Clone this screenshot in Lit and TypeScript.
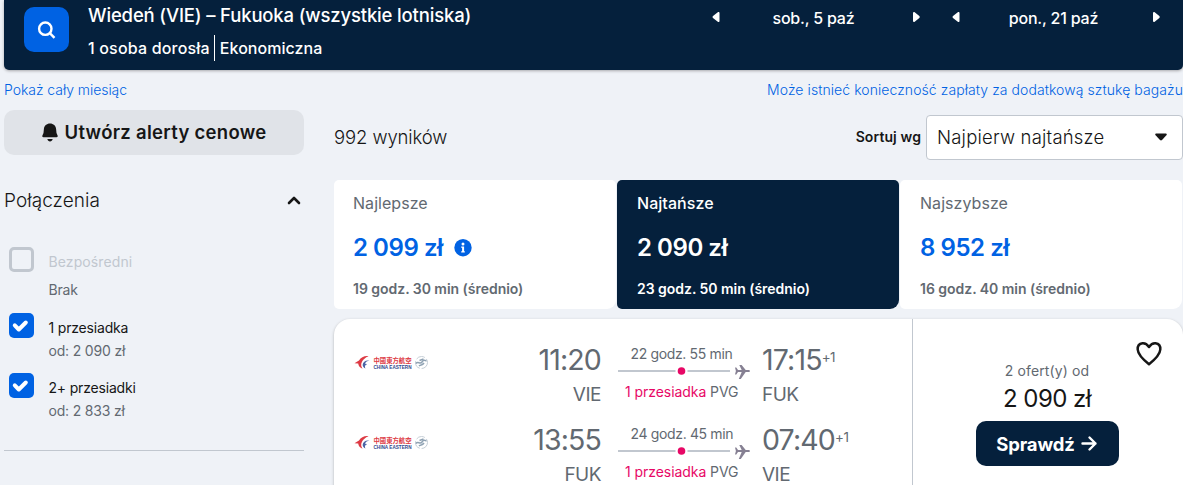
import { html, css, svg, LitElement } from 'lit';
import { customElement, property } from 'lit/decorators.js';
import { classMap } from 'lit/directives/class-map.js';

@customElement('search-header')
export class SearchHeader extends LitElement {
  static styles = css`
    :host {
      display: block;
    }

    header {
      box-sizing: border-box;
      height: 70px;
      padding: 0 23px 0 20px;
      display: flex;
      align-items: flex-start;
      background: #05203c;
      color: #fff;
      border-radius: 0 0 5px 5px;
      box-shadow: 0 1px 3px rgba(37, 32, 31, 0.35);
      font-weight: 450;
      font-size: 16px;
    }

    .search {
      display: flex;
      align-items: center;
      justify-content: center;
      width: 45px;
      height: 45px;
      margin: 7px 19px 0 0;
      padding: 0;
      border: 0;
      border-radius: 10px;
      background: #0062e3;
    }

    .route {
      line-height: 24px;
      padding-top: 3px;
      font-size: 18.5px;
      letter-spacing: -0.16px;
      white-space: nowrap;
    }

    .details {
      display: flex;
      margin-top: 8px;
      line-height: 26px;
      letter-spacing: 0.18px;
    }

    .details span + span {
      margin-left: 4px;
      padding-left: 5px;
      border-left: 1px solid #fff;
      letter-spacing: 0.05px;
    }

    .dates {
      margin-left: auto;
      display: flex;
      gap: 32px;
      padding-top: 6px;
    }

    .stepper {
      width: 208px;
      display: flex;
      justify-content: space-between;
      line-height: 24px;
      letter-spacing: -0.2px;
    }

    .stepper span {
      margin-right: 5px;
    }

    .stepper svg {
      display: block;
      margin-top: 5px;
    }
  `;

  stepper(label: string) {
    return html`
      <div class="stepper">
        <svg width="8" height="12" viewBox="0 0 8 12"><path fill="#fff" d="M7.500 2v8c0 1-1 1.300-1.700.7L1 7c-.6-.5-.6-1.400 0-2L5.800 1.300C6.500.7 7.500 1 7.500 2z" /></svg>
        <span>${label}</span>
        <svg width="8" height="12" viewBox="0 0 8 12"><path fill="#fff" d="M1 2v8c0 1 1 1.300 1.700.7L7.300 7c.6-.5.6-1.400 0-2L2.700 1.300C2 .7 1 1 1 2z" /></svg>
      </div>
    `;
  }

  render() {
    return html`
      <header>
        <button class="search">
          <svg width="20" height="20" viewBox="0 0 20 20" fill="none" stroke="#fff" stroke-width="2.400">
            <circle cx="8.300" cy="8.700" r="6.200" />
            <path d="M12.800 13.200l4.700 4.700" />
          </svg>
        </button>
        <div>
          <div class="route">Wiedeń (VIE) – Fukuoka (wszystkie lotniska)</div>
          <div class="details"><span>1 osoba dorosła</span><span>Ekonomiczna</span></div>
        </div>
        <div class="dates">${this.stepper('sob., 5 paź')} ${this.stepper('pon., 21 paź')}</div>
      </header>
    `;
  }
}

@customElement('stops-filter')
export class StopsFilter extends LitElement {
  static styles = css`
    :host {
      display: block;
    }

    .alert {
      width: 300px;
      height: 45px;
      border: 0;
      border-radius: 10px;
      background: #e0e3e8;
      color: #161616;
      display: flex;
      align-items: center;
      justify-content: center;
      gap: 7px;
      padding: 0 0 1px;
      font: 600 18.5px Inter, sans-serif;
      letter-spacing: 0.28px;
      white-space: nowrap;
    }

    .title {
      display: flex;
      justify-content: space-between;
      align-items: center;
      margin-top: 33px;
      padding-right: 3px;
      line-height: 25px;
      font-size: 19px;
      font-weight: 350;
      letter-spacing: 0.05px;
      color: #161616;
    }

    .option {
      display: flex;
      height: 60px;
      padding-left: 5px;
    }

    .option.disabled {
      height: 66px;
      margin-top: 34px;
    }

    .box {
      box-sizing: border-box;
      width: 25px;
      height: 25px;
      border-radius: 5px;
      background: #0062e3;
      margin-right: 14.5px;
    }

    .disabled .box {
      background: none;
      border: 3px solid #c1c7cf;
    }

    .box svg {
      display: block;
    }

    .name,
    .price {
      font-size: 14px;
      line-height: 23px;
      color: #161616;
      letter-spacing: -0.18px;
    }

    .name {
      padding-top: 3px;
    }

    .price {
      color: #626971;
    }

    .disabled .name {
      color: #c1c7cf;
      line-height: 24px;
      letter-spacing: 0.1px;
    }

    .disabled .price {
      line-height: 32px;
    }

    hr {
      margin: 17px 0 0;
      border: 0;
      height: 1px;
      background: #c1c7cf;
    }
  `;

  options = [
    { name: 'Bezpośredni', price: 'Brak', disabled: true },
    { name: '1 przesiadka', price: 'od: 2 090 zł', disabled: false },
    { name: '2+ przesiadki', price: 'od: 2 833 zł', disabled: false },
  ];

  render() {
    return html`
      <button class="alert">
        <svg width="16" height="19" viewBox="0 0 16 19" fill="#161616">
          <path d="M8 .5c-3.400 0-5.800 2.300-6.100 5.500L1.500 10 .4 12.500C0 13.500.5 14.200 1.500 14.200h13c1 0 1.500-.7 1.100-1.700L14.500 10l-.4-4C13.800 2.800 11.400.5 8 .5z" />
          <path d="M5.300 16h5.400c-.4 1.600-1.300 2.400-2.700 2.400S5.700 17.600 5.300 16z" />
        </svg>
        Utwórz alerty cenowe
      </button>
      <div class="title">
        Połączenia
        <svg width="14" height="10" viewBox="0 0 14 10" fill="none" stroke="#161616" stroke-width="2.600" stroke-linecap="round" stroke-linejoin="round">
          <path d="M2 7l5-5 5 5" />
        </svg>
      </div>
      ${this.options.map(
        (option) => html`
          <div class=${classMap({ option: true, disabled: option.disabled })}>
            <div class="box">
              ${option.disabled
                ? ''
                : html`<svg width="25" height="25" viewBox="0 0 25 25" fill="none" stroke="#fff" stroke-width="4" stroke-linecap="round" stroke-linejoin="round">
                    <path d="M5.800 12.300l4 4.200 7-7" />
                  </svg>`}
            </div>
            <div>
              <div class="name">${option.name}</div>
              <div class="price">${option.price}</div>
            </div>
          </div>
        `
      )}
      <hr />
    `;
  }
}

@customElement('sort-tabs')
export class SortTabs extends LitElement {
  static styles = css`
    :host {
      display: grid;
      grid-template-columns: repeat(3, 1fr);
      gap: 1px;
      padding-right: 1px;
    }

    .tab {
      box-sizing: border-box;
      height: 129px;
      padding: 11px 20px 0;
      background: #fff;
      border-radius: 5px 5px 9px 5px;
      color: #626971;
      white-space: nowrap;
    }

    .tab:first-child {
      padding-left: 19px;
    }

    .label {
      font-size: 16px;
      line-height: 24px;
      letter-spacing: 0.05px;
    }

    .price {
      display: flex;
      align-items: center;
      gap: 11px;
      margin-top: 17px;
      font-size: 24px;
      line-height: 32px;
      font-weight: 600;
      letter-spacing: -0.45px;
      color: #0062e3;
    }

    .time {
      margin-top: 14px;
      font-size: 14px;
      line-height: 22px;
      font-weight: 600;
      letter-spacing: -0.03px;
    }

    .tab.selected {
      background: #05203c;
    }

    .selected .label,
    .selected .price,
    .selected .time {
      color: #fff;
    }

    .selected .label {
      font-weight: 450;
    }
  `;

  tabs = [
    { label: 'Najlepsze', price: '2 099 zł', time: '19 godz. 30 min (średnio)', info: true },
    { label: 'Najtańsze', price: '2 090 zł', time: '23 godz. 50 min (średnio)', selected: true },
    { label: 'Najszybsze', price: '8 952 zł', time: '16 godz. 40 min (średnio)' },
  ];

  render() {
    return this.tabs.map(
      (tab) => html`
        <div class=${classMap({ tab: true, selected: !!tab.selected })}>
          <div class="label">${tab.label}</div>
          <div class="price">
            <span>${tab.price}</span>
            ${tab.info
              ? html`<svg width="18" height="18" viewBox="0 0 18 18">
                  <circle cx="9" cy="8.700" r="8.700" fill="#0062e3" />
                  <circle cx="9" cy="5" r="1.500" fill="#fff" />
                  <path d="M7.200 7.400h2.900v4.800h.7v1.400H7.200v-1.400h.9V8.800h-.9z" fill="#fff" />
                </svg>`
              : ''}
          </div>
          <div class="time">${tab.time}</div>
        </div>
      `
    );
  }
}

@customElement('flight-leg')
export class FlightLeg extends LitElement {
  static styles = css`
    :host {
      display: grid;
      grid-template-columns: 76px 171px 132px 1fr;
      height: 80px;
      color: #626971;
      white-space: nowrap;
    }

    .logo {
      margin-top: 12px;
      overflow: visible;
    }

    .logo .cn {
      font: 700 6.5px 'Noto Sans CJK TC', sans-serif;
    }

    .logo .en {
      font: 700 5px 'Liberation Sans', sans-serif;
    }

    .depart {
      text-align: right;
    }

    .time {
      font-size: 28.5px;
      line-height: 40px;
      letter-spacing: -0.85px;
    }

    .time span {
      font-size: 13.5px;
      line-height: 13px;
      letter-spacing: -0.5px;
      vertical-align: 8px;
    }

    .code {
      font-size: 19px;
      line-height: 29px;
      letter-spacing: -0.5px;
    }

    .stops {
      margin: 3px 0 0 17px;
      width: 132px;
      font-size: 14px;
    }

    .duration {
      line-height: 22px;
      padding-left: 12.5px;
      letter-spacing: -0.35px;
    }

    .line {
      display: block;
    }

    .via {
      line-height: 22px;
      padding-left: 7px;
      letter-spacing: -0.06px;
    }

    .via span {
      color: #e70866;
    }

    .arrive {
      padding-left: 29px;
    }
  `;

  @property() depart = '';
  @property() from = '';
  @property() arrive = '';
  @property() to = '';
  @property() duration = '';

  logo() {
    return svg`
      <path fill="#dd3a44" d="M14.500 4.200C10.500 3.600 7 5.500 5 8.500L.5 11.200l3.700.3c.3 2.400 1.800 4.300 4.300 5.200C7 14.500 6.700 12 8 9.700c1.200-2.300 3.300-4.200 6.500-5.500z" />
      <path fill="#4a62a4" d="M15.500 8.600C11.500 8 9 10 8.700 12.500c-.2 1.700.8 3.100 2.700 4-1-2.500-.3-3.700 1.800-4.300-.8-.7-1.500-.7-2.300-.3.800-1.900 2.300-2.900 4.600-3.300z" />
      <text class="cn" x="19.500" y="11" fill="#dd3a44" textLength="38" lengthAdjust="spacingAndGlyphs">中國東方航空</text>
      <text class="en" x="19.500" y="16.800" fill="#33488c" textLength="38" lengthAdjust="spacingAndGlyphs">CHINA EASTERN</text>
      <circle cx="67.500" cy="10.500" r="6" fill="none" stroke="#c5ced6" stroke-width="1" stroke-dasharray="9 2" />
      <path fill="none" stroke="#8fa2b3" stroke-width="1.500" d="M62 11.500c2-3 4 1.500 6-1.500s3-1.500 4.500-1M65 14c2-2 3 0 5-3M65.500 8.500l4-1.500" />
    `;
  }

  render() {
    return html`
      <svg class="logo" width="76" height="20" viewBox="0 0 76 20">${this.logo()}</svg>
      <div class="depart">
        <div class="time">${this.depart}</div>
        <div class="code">${this.from}</div>
      </div>
      <div class="stops">
        <div class="duration">${this.duration}</div>
        <svg class="line" width="132" height="16" viewBox="0 0 132 16">
          <path d="M0 6h57.500M69.500 6H112" stroke="#c1c7cf" stroke-width="2" />
          <circle cx="63.500" cy="6" r="3.800" fill="#e70866" />
          <path fill="#868093" d="M117 2.500h1.300l1.700 2.400h3.700L120.800-1h2l4.900 5.900h2.600c1 0 1.700.5 1.700 1.100s-.7 1.100-1.700 1.100h-2.600L122.800 14h-2l2.900-6.900H120l-1.700 2.400H117l.9-3.500z" />
        </svg>
        <div class="via"><span>1 przesiadka</span> PVG</div>
      </div>
      <div class="arrive">
        <div class="time">${this.arrive}<span>+1</span></div>
        <div class="code">${this.to}</div>
      </div>
    `;
  }
}

@customElement('ticket-card')
export class TicketCard extends LitElement {
  static styles = css`
    :host {
      display: block;
    }

    .card {
      position: relative;
      display: flex;
      height: 190px;
      background: #fff;
      border-radius: 16px;
      box-shadow: 0 1px 3px rgba(37, 32, 31, 0.3);
    }

    .legs {
      width: 558px;
      padding: 21px 0 0 20px;
      border-right: 1px solid #c1c7cf;
    }

    .offer {
      flex: 1;
      display: flex;
      flex-direction: column;
      align-items: center;
      padding: 42px 2px 0 0;
      color: #626971;
    }

    .count {
      font-size: 14px;
      line-height: 20px;
      letter-spacing: 0.12px;
    }

    .price {
      margin-top: 3px;
      font-size: 24px;
      line-height: 30px;
      letter-spacing: -0.55px;
      color: #161616;
    }

    .check {
      width: 143px;
      height: 45px;
      margin-top: 7px;
      padding: 0;
      border: 0;
      border-radius: 10px;
      background: #05203c;
      color: #fff;
      display: flex;
      align-items: center;
      justify-content: center;
      gap: 6px;
      font: 700 18.5px Inter, sans-serif;
      letter-spacing: -0.15px;
    }

    .heart {
      position: absolute;
      top: 22px;
      right: 20px;
    }
  `;

  render() {
    return html`
      <div class="card">
        <div class="legs">
          <flight-leg depart="11:20" from="VIE" arrive="17:15" to="FUK" duration="22 godz. 55 min"></flight-leg>
          <flight-leg depart="13:55" from="FUK" arrive="07:40" to="VIE" duration="24 godz. 45 min"></flight-leg>
        </div>
        <div class="offer">
          <div class="count">2 ofert(y) od</div>
          <div class="price">2 090 zł</div>
          <button class="check">
            Sprawdź
            <svg width="17" height="17" viewBox="0 0 17 17" fill="none" stroke="#fff" stroke-width="2.400" stroke-linecap="round" stroke-linejoin="round">
              <path d="M1.500 8.500h13M8.500 2.500l6 6-6 6" />
            </svg>
          </button>
        </div>
        <svg class="heart" width="28" height="26" viewBox="0 0 28 26" fill="none" stroke="#161616" stroke-width="2.500" stroke-linejoin="round">
          <path d="M14 6C11.800 2.800 9.500 2.100 7.500 2.300 4.300 2.800 2.500 5.400 2.700 8.500c.3 5 4.600 9.400 11.300 14.700 6.700-5.300 11-9.700 11.300-14.700.2-3.100-1.600-5.700-4.800-6.200-2-.2-4.300.5-6.500 3.700z" />
        </svg>
      </div>
    `;
  }
}

@customElement('app-root')
export class AppRoot extends LitElement {
  static styles = css`
    :host {
      display: block;
      box-sizing: border-box;
      height: 485px;
      overflow: hidden;
      padding-left: 4px;
      background: #eff2f7;
      color: #161616;
      font-family: Inter, sans-serif;
    }

    .links {
      display: flex;
      justify-content: space-between;
      height: 40px;
      line-height: 40px;
      font-size: 14px;
      font-weight: 350;
      letter-spacing: -0.05px;
      white-space: nowrap;
      color: #0062e3;
    }

    .links .baggage {
      letter-spacing: 0.07px;
    }

    .main {
      display: grid;
      grid-template-columns: 300px 849px;
      gap: 30px;
    }

    .toolbar {
      display: flex;
      align-items: center;
      height: 55px;
      margin-bottom: 15px;
    }

    .count {
      margin-right: auto;
      padding-bottom: 2px;
      font-size: 18.5px;
      font-weight: 350;
      letter-spacing: -0.1px;
    }

    .sort {
      padding-bottom: 2px;
      font-size: 14px;
      font-weight: 600;
      letter-spacing: 0.1px;
      margin-right: 5px;
    }

    .select {
      box-sizing: border-box;
      width: 257px;
      height: 45px;
      padding: 0 15px 2px 10px;
      display: flex;
      align-items: center;
      justify-content: space-between;
      background: #fff;
      border: 1px solid #c1c7cf;
      border-radius: 4px;
      font-size: 18.5px;
      font-weight: 350;
      letter-spacing: 0.2px;
    }

    .select svg {
      margin-top: 1px;
    }

    ticket-card {
      margin-top: 10px;
    }
  `;

  render() {
    return html`
      <search-header></search-header>
      <div class="links">
        <span>Pokaż cały miesiąc</span>
        <span class="baggage">Może istnieć konieczność zapłaty za dodatkową sztukę bagażu</span>
      </div>
      <div class="main">
        <stops-filter></stops-filter>
        <div>
          <div class="toolbar">
            <span class="count">992 wyników</span>
            <span class="sort">Sortuj wg</span>
            <div class="select">
              <span>Najpierw najtańsze</span>
              <svg width="12" height="8" viewBox="0 0 12 8"><path fill="#161616" d="M1.500.5h9c1.200 0 1.600 1 .9 1.800L7 7c-.6.6-1.400.6-2 0L.6 2.300C-.1 1.500.3.5 1.500.5z" /></svg>
            </div>
          </div>
          <sort-tabs></sort-tabs>
          <ticket-card></ticket-card>
        </div>
      </div>
    `;
  }
}
